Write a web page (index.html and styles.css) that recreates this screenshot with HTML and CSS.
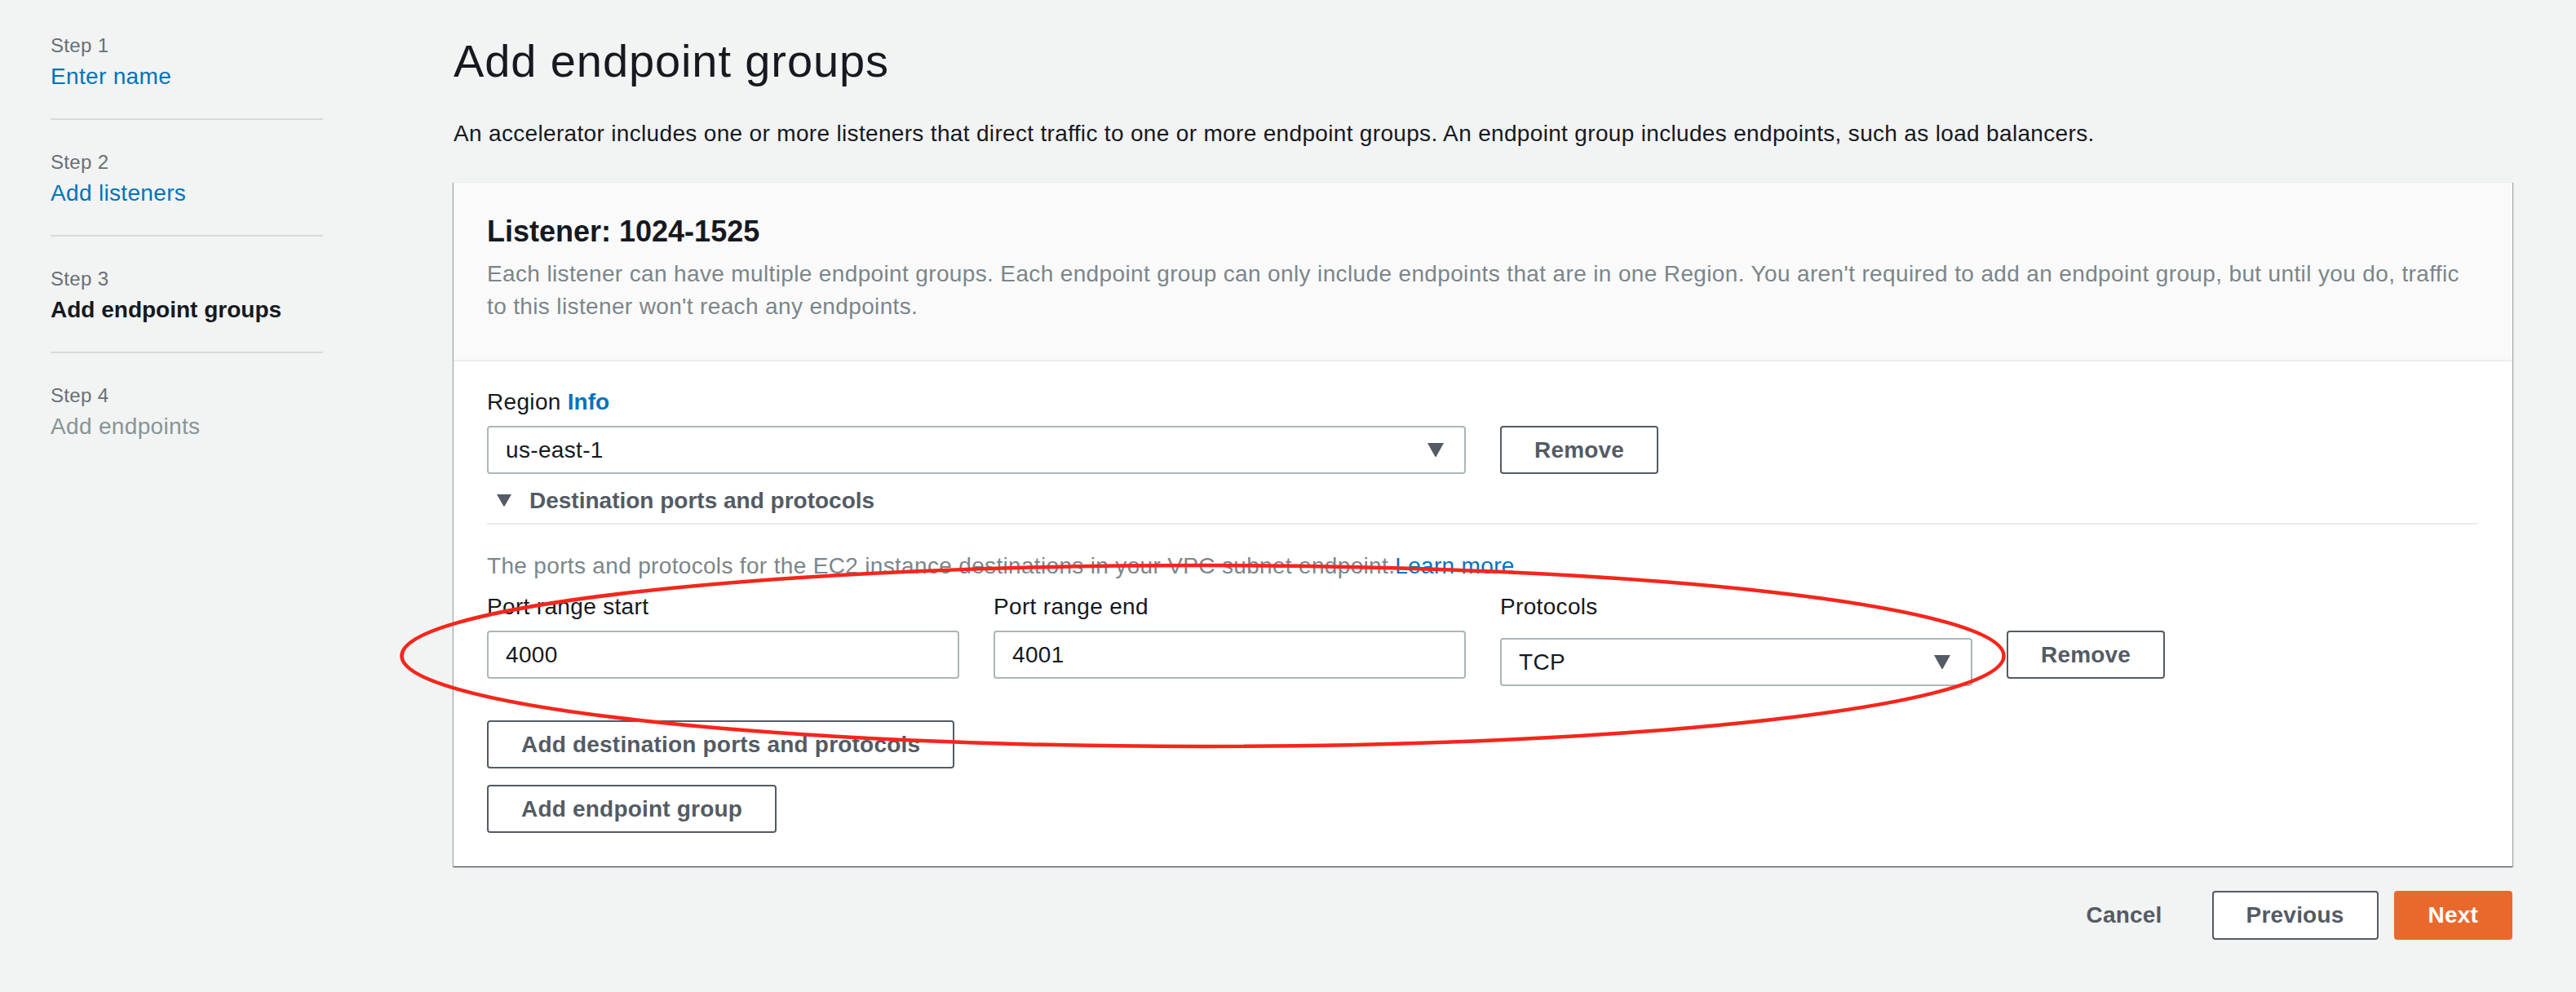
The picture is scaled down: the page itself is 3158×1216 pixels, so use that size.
FILE: index.html
```html
<!DOCTYPE html>
<html lang="en">
<head>
<meta charset="utf-8">
<title>Add endpoint groups</title>
<link rel="stylesheet" href="styles.css">
</head>
<body>
<div class="page">
  <nav class="steps">
    <div class="step">
      <div class="step-label">Step 1</div>
      <a class="step-title link" href="#">Enter name</a>
    </div>
    <div class="step">
      <div class="step-label">Step 2</div>
      <a class="step-title link" href="#">Add listeners</a>
    </div>
    <div class="step">
      <div class="step-label">Step 3</div>
      <div class="step-title current">Add endpoint groups</div>
    </div>
    <div class="step">
      <div class="step-label">Step 4</div>
      <div class="step-title disabled">Add endpoints</div>
    </div>
  </nav>

  <main class="main">
    <h1 class="page-title">Add endpoint groups</h1>
    <p class="intro">An accelerator includes one or more listeners that direct traffic to one or more endpoint groups. An endpoint group includes endpoints, such as load balancers.</p>

    <section class="card">
      <header class="card-header">
        <h2 class="card-title">Listener: 1024-1525</h2>
        <p class="card-desc">Each listener can have multiple endpoint groups. Each endpoint group can only include endpoints that are in one Region. You aren't required to add an endpoint group, but until you do, traffic to this listener won't reach any endpoints.</p>
      </header>

      <div class="card-body">
        <div class="form-grid">
          <div class="field span-2">
            <div class="label">Region <a class="info" href="#">Info</a></div>
            <div class="select">
              <span>us-east-1</span>
              <svg class="caret" width="20" height="17" viewBox="0 0 20 17"><path d="M0 0H20L10.8 16.4Q10 17.4 9.2 16.4Z"/></svg>
            </div>
          </div>
          <div class="field">
            <div class="label spacer">&nbsp;</div>
            <button class="btn">Remove</button>
          </div>
        </div>

        <div class="expander">
          <svg class="exp-caret" width="18" height="15" viewBox="0 0 18 15"><path d="M0 0H18L9.7 14.3Q9 15.3 8.3 14.3Z"/></svg>
          <span>Destination ports and protocols</span>
        </div>

        <p class="hint">The ports and protocols for the EC2 instance destinations in your VPC subnet endpoint.<a class="link" href="#">Learn more</a></p>

        <div class="form-grid ports">
          <div class="field">
            <div class="label">Port range start</div>
            <div class="input">4000</div>
          </div>
          <div class="field">
            <div class="label">Port range end</div>
            <div class="input">4001</div>
          </div>
          <div class="field">
            <div class="label">Protocols</div>
            <div class="select select-offset">
              <span>TCP</span>
              <svg class="caret" width="20" height="17" viewBox="0 0 20 17"><path d="M0 0H20L10.8 16.4Q10 17.4 9.2 16.4Z"/></svg>
            </div>
          </div>
          <div class="field">
            <div class="label spacer">&nbsp;</div>
            <button class="btn">Remove</button>
          </div>
        </div>

        <div class="stack">
          <button class="btn">Add destination ports and protocols</button>
          <button class="btn">Add endpoint group</button>
        </div>
      </div>
    </section>

    <div class="actions">
      <button class="btn btn-link">Cancel</button>
      <button class="btn">Previous</button>
      <button class="btn btn-primary">Next</button>
    </div>
  </main>
</div>

<svg class="annotation" width="3158" height="1216" viewBox="0 0 3158 1216">
  <ellipse cx="1474.5" cy="804" rx="982" ry="111" fill="none" stroke="#f5261c" stroke-width="4.5"/>
</svg>
</body>
</html>
```
FILE: styles.css
```css
* { box-sizing: border-box; }

html, body {
  margin: 0;
  padding: 0;
}

body {
  position: relative;
  width: 3158px;
  height: 1216px;
  overflow: hidden;
  background: #f2f3f3;
  color: #16191f;
  font-family: "Liberation Sans", Arial, sans-serif;
  font-size: 28px;
  line-height: 40px;
  letter-spacing: 0.33px;
}

a { text-decoration: none; }

.page {
  display: flex;
  align-items: flex-start;
  padding-left: 62px;
}

/* ---------- steps sidebar ---------- */
.steps {
  width: 334px;
  flex: none;
  padding-top: 4px;
}

.step {
  padding: 34px 0 31px;
  border-bottom: 2px solid #d5dbdb;
}

.step:last-child { border-bottom: none; }

.step-label {
  font-size: 24px;
  line-height: 36px;
  color: #687078;
}

.step-title {
  display: block;
  font-size: 28px;
  line-height: 40px;
}

.step-title.link { color: #0073bb; }
.step-title.current { font-weight: 700; color: #16191f; letter-spacing: 0; }
.step-title.disabled { color: #879596; }

/* ---------- main ---------- */
.main {
  margin-left: 160px;
  width: 2524px;
  padding-top: 39px;
}

.page-title {
  margin: 0;
  font-size: 56px;
  line-height: 72px;
  font-weight: 400;
  letter-spacing: 0.9px;
  color: #16191f;
}

.intro {
  margin: 33px 0 0;
}

/* ---------- card ---------- */
.card {
  margin-top: 39px;
  background: #fff;
  box-shadow: 0 1px 1px 0 rgba(0, 28, 36, 0.5),
              1px 1px 1px 0 rgba(0, 28, 36, 0.3),
              -1px 1px 1px 0 rgba(0, 28, 36, 0.3);
  border-top: 1px solid #eaeded;
}

.card-header {
  background: #fafafa;
  padding: 36px 42px 45px 41px;
  border-bottom: 2px solid #eaeded;
}

.card-title {
  margin: 0;
  font-size: 36px;
  line-height: 48px;
  font-weight: 700;
  letter-spacing: 0;
}

.card-desc {
  margin: 8px 0 0;
  max-width: 2430px;
  color: #7b868b;
  letter-spacing: 0.36px;
}

.card-body {
  padding: 30px 42px 41px 41px;
}

.form-grid {
  display: grid;
  grid-template-columns: 579px 579px 579px auto;
  column-gap: 42px;
  align-items: start;
}

.span-2 { grid-column: span 2; }

.field {
  display: flex;
  flex-direction: column;
  align-items: flex-start;
}

.label {
  line-height: 40px;
  margin-bottom: 9px;
  color: #16191f;
}

.info {
  color: #0073bb;
  font-weight: 700;
  letter-spacing: 0;
}

.select,
.input {
  width: 100%;
  height: 59px;
  border: 2px solid #aab7b8;
  border-radius: 4px;
  background: #fff;
  display: flex;
  align-items: center;
  padding: 0 25px 0 21px;
  color: #16191f;
}

.select { justify-content: space-between; }
.select-offset { margin-top: 9px; }

.caret { fill: #545b64; display: block; }

.expander {
  margin-top: 13px;
  padding: 0 0 7px 12px;
  border-bottom: 2px solid #eaeded;
  display: flex;
  align-items: center;
  gap: 22px;
  font-weight: 700;
  color: #545b64;
  letter-spacing: 0;
}

.exp-caret { fill: #545b64; display: block; margin-top: -2px; }

.hint {
  margin: 31px 0 0;
  color: #7b868b;
}

.hint .link { color: #0073bb; }

.ports { margin-top: 10px; }

.stack {
  margin-top: 42px;
  display: flex;
  flex-direction: column;
  align-items: flex-start;
  gap: 20px;
}

/* ---------- buttons ---------- */
.btn {
  display: inline-flex;
  align-items: center;
  justify-content: center;
  height: 59px;
  padding: 0 40px;
  border: 2px solid #545b64;
  border-radius: 4px;
  background: #fff;
  color: #545b64;
  font-family: inherit;
  font-size: 28px;
  font-weight: 700;
  letter-spacing: 0.2px;
  cursor: pointer;
}

.btn-link {
  background: transparent;
  border-color: transparent;
}

.btn-primary {
  background: #e9692c;
  border-color: #e9692c;
  color: #fff;
}

.actions {
  margin-top: 30px;
  display: flex;
  justify-content: flex-end;
  gap: 19px;
}

.actions .btn { height: 60px; }

/* ---------- annotation overlay ---------- */
.annotation {
  position: absolute;
  left: 0;
  top: 0;
  pointer-events: none;
}
```
